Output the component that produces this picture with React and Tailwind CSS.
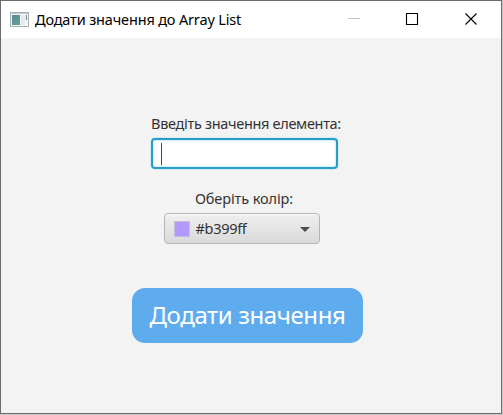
function AppIcon() {
  return (
    <svg width="19" height="15" viewBox="0 0 19 15" className="mb-px shrink-0" shapeRendering="crispEdges">
      <defs>
        <linearGradient id="pane" x1="0" y1="0" x2="1" y2="1">
          <stop offset="0" stopColor="#5d86a0" />
          <stop offset="1" stopColor="#62a38c" />
        </linearGradient>
      </defs>
      <rect x="0.5" y="0.5" width="18" height="14" fill="#f4f6f7" stroke="#a9b0b4" />
      <rect x="1" y="1" width="17" height="1" fill="#c3cacd" />
      <rect x="2" y="3" width="8" height="10" fill="url(#pane)" />
      <rect x="11" y="3" width="4" height="10" fill="#e6eaec" />
      <rect x="16" y="3" width="1" height="5" fill="#6c8580" />
    </svg>
  );
}

function TitleBar() {
  return (
    <header className="flex h-[37px] shrink-0 items-center bg-white pl-[9px]">
      <AppIcon />
      <h1 className="mb-[2px] ml-[6px] flex-1 whitespace-nowrap text-[14.5px] leading-5 tracking-[-0.16px] text-black">
        Додати значення до Array List
      </h1>
      <svg width="130" height="14" viewBox="0 0 130 14" className="mr-[23px] mb-px shrink-0" fill="none">
        <path d="M0 6.5h12" stroke="#c4c4c4" />
        <path d="M58.5 1.5h11v11h-11z" stroke="#000" strokeWidth="1.1" />
        <path d="M117.5 1.5l11 11M128.5 1.5l-11 11" stroke="#000" strokeWidth="1.1" />
      </svg>
    </header>
  );
}

export default function App() {
  return (
    <div className="h-[415px] w-[503px] bg-[#c9c9c9] pr-px pb-px font-['Noto_Sans','Open_Sans',sans-serif]">
      <div className="flex h-full flex-col border border-[#6c6a6c] bg-[#f3f3f3]">
        <TitleBar />
        <main className="flex flex-col items-center pr-[7px] pt-[75px]">
          <label className="mr-[3px] whitespace-nowrap text-[14.5px] leading-5 tracking-[-0.32px] text-[#333]">
            Введіть значення елемента:
          </label>
          <div className="mt-[5px] mr-[7px] flex h-[31px] w-[187px] items-center rounded-[4px] border-2 border-[#2a9cc6] bg-white pl-[8px] shadow-[0_0_0_1px_#d3edf8,inset_0_0_2px_1px_#c9effc]">
            <span className="h-[22px] w-px bg-[#444]" />
          </div>
          <span className="mt-[19px] mr-[7px] whitespace-nowrap text-[14.5px] leading-5 tracking-[-0.1px] text-[#333]">
            Оберіть колір:
          </span>
          <button className="mt-[5px] mr-[12px] flex h-[31px] w-[156px] items-center rounded-[4px] border border-[#b5b5b5] bg-linear-to-b from-[#efefef] to-[#dadada] pr-[9px] pl-[9px] shadow-[inset_0_1px_0_#fafafa]">
            <span className="size-4 border border-[#c6bddb] bg-[#b399ff]" />
            <span className="mb-px ml-[6px] flex-1 text-left text-[14.5px] leading-5 tracking-[-0.3px] text-[#333]">#b399ff</span>
            <svg width="10" height="5" viewBox="0 0 10 5" className="mt-px">
              <path d="M0 0h10L5 5z" fill="#4c4c4c" />
            </svg>
          </button>
          <button className="mt-[44px] h-[55px] w-[231px] rounded-[13px] bg-[#5eacee] pb-px text-[24px] tracking-[-0.4px] whitespace-nowrap text-white">
            Додати значення
          </button>
        </main>
      </div>
    </div>
  );
}
